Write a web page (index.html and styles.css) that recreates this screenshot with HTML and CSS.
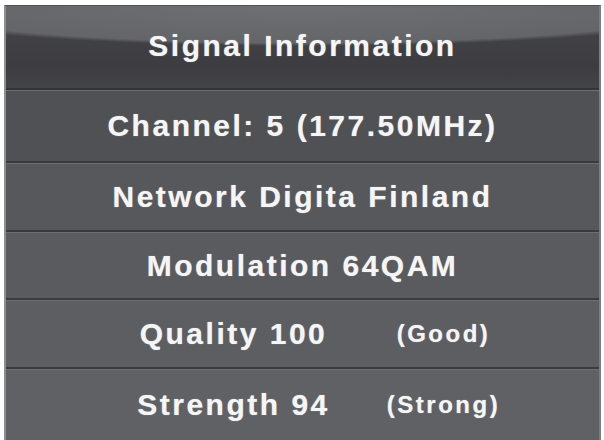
FILE: index.html
```html
<!DOCTYPE html>
<html>
<head>
<meta charset="utf-8">
<link rel="stylesheet" href="styles.css">
</head>
<body>
<div class="panel">
  <div class="header">Signal Information</div>
  <div class="row r1">Channel: 5 (177.50MHz)</div>
  <div class="row r2">Network Digita Finland</div>
  <div class="row r3">Modulation 64QAM</div>
  <div class="row r4 split"><span class="main">Quality 100</span><span class="note">(Good)</span></div>
  <div class="row r5 split last"><span class="main">Strength 94</span><span class="note">(Strong)</span></div>
</div>
</body>
</html>
```
FILE: styles.css
```css
html, body {
  margin: 0;
  padding: 0;
  background: #ffffff;
  width: 604px;
  height: 440px;
  overflow: hidden;
}

.panel {
  margin: 5px 3px 0 4px;
  height: 435px;
  display: flex;
  flex-direction: column;
  border-left: 2px solid #8e8f93;
  border-right: 2px solid #7c7d81;
  border-top: 1px solid #505155;
  box-sizing: border-box;
  font-family: "Liberation Sans", Arial, sans-serif;
  font-weight: bold;
  color: #f5f5f5;
  text-shadow: 0 0 1px rgba(255, 255, 255, 0.55);
  letter-spacing: 2.5px;
  box-shadow: inset 9px 0 0 -1px rgba(255, 255, 255, 0.04), inset -9px 0 0 -1px rgba(255, 255, 255, 0.04);
}

.header {
  height: 84px;
  flex: none;
  box-sizing: border-box;
  display: flex;
  align-items: center;
  justify-content: center;
  padding-bottom: 3px;
  font-size: 30px;
  line-height: 1;
  background-color: #3e3e42;
  background-image:
    radial-gradient(ellipse 430px 40px at 50% 0, #6e7074 0%, #636569 92%, rgba(99, 101, 105, 0) 100%),
    linear-gradient(#46464a, #3d3d41 75%, #434448);
  border-bottom: 2px solid #333437;
}

.row {
  flex: none;
  box-sizing: border-box;
  display: flex;
  align-items: center;
  justify-content: center;
  font-size: 30px;
  line-height: 1;
  border-top: 1px solid #6d6e72;
  border-bottom: 2px solid #3a3b3e;
}

.r1 { height: 73px; background: #505155; }
.r2 { height: 69px; background: #57585c; }
.r3 { height: 68px; background: #5a5b5f; }
.r4 { height: 69px; background: #5d5e62; }
.r5 { flex: 1; background: #606165; }

.last { border-bottom: none; }

.split {
  padding-left: 12px;
  gap: 30px;
}

.split .main {
  width: 240px;
  text-align: center;
}

.split .note {
  width: 120px;
  text-align: center;
  font-size: 24px;
  letter-spacing: 2.5px;
}
```
